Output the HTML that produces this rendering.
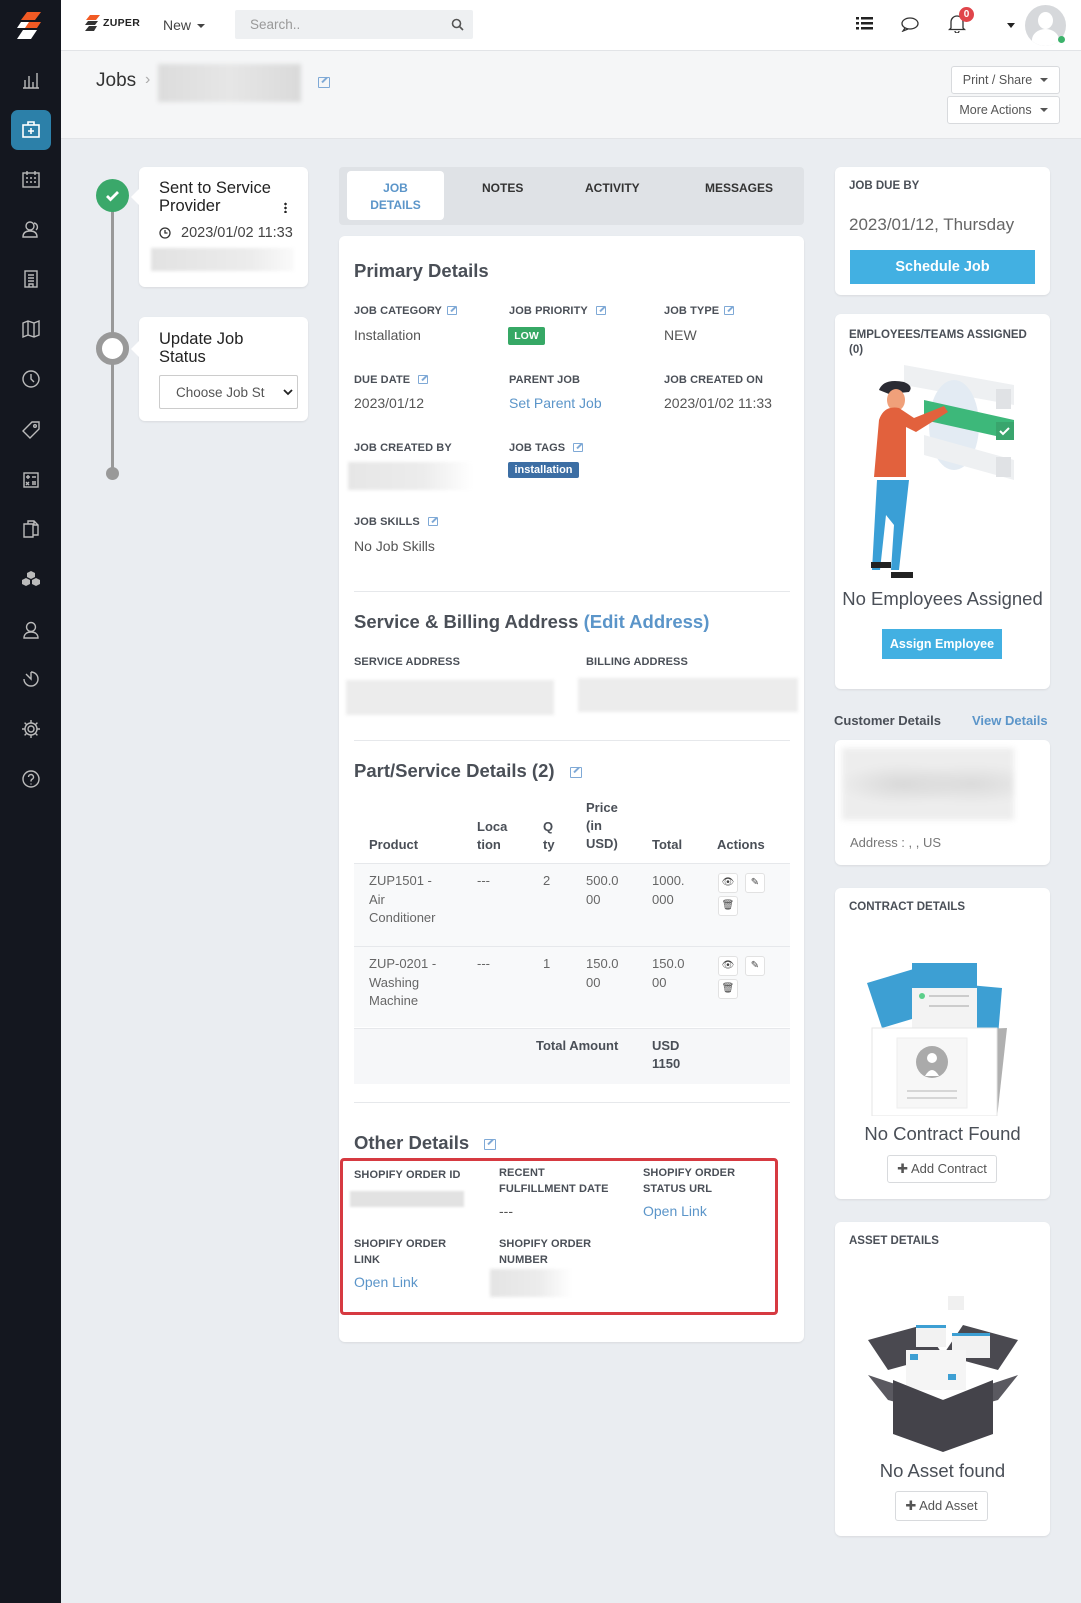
<!DOCTYPE html>
<html><head><meta charset="utf-8">
<style>
*{box-sizing:border-box;margin:0;padding:0}
body{width:1081px;height:1603px;background:#eaedf1;font-family:"Liberation Sans",sans-serif;color:#4a4f57;position:relative;overflow:hidden}
.a{position:absolute}
.card{position:absolute;background:#fff;border-radius:6px;box-shadow:0 1px 2px rgba(0,0,0,.08)}
.lbl{position:absolute;font-size:11px;font-weight:bold;color:#4a4f57;line-height:15px;letter-spacing:.1px}
.val{position:absolute;font-size:14px;color:#555;}
.link{color:#5b95c9}
.blur{position:absolute;background:linear-gradient(90deg,#e4e4e4,#eeeeee 60%,#f6f6f6);filter:blur(1.5px)}
.ed{display:inline-block;width:10px;height:9px;border:1.3px solid #7fa9d6;border-radius:1px;margin-left:5px;position:relative;vertical-align:-1px}
.ed:after{content:"";position:absolute;width:7px;height:2px;background:#7fa9d6;transform:rotate(-45deg);left:2px;top:1px}
.h2{position:absolute;font-size:18.5px;font-weight:bold;color:#4a4f57}
.hr{position:absolute;left:354px;width:436px;height:1px;background:#e6e8eb}
.th{position:absolute;font-size:13px;font-weight:bold;color:#4a4f57;line-height:18px}
.td{position:absolute;font-size:13px;color:#666;line-height:18.5px}
.ib{position:absolute;width:20px;height:20px;border:1px solid #e2e2e2;border-radius:3px;background:#fff;font-size:10px;text-align:center;line-height:18px;color:#444}
.sb svg{position:absolute;left:21px;width:20px;height:20px}
.btn{position:absolute;background:#fff;border:1px solid #d8dadd;border-radius:3px;font-size:12.5px;color:#555;text-align:center}
.car{display:inline-block;border-left:4px solid transparent;border-right:4px solid transparent;border-top:4px solid #555;vertical-align:2px;margin-left:8px}
.rt{position:absolute;font-size:11.5px;font-weight:bold;color:#4a4f57;left:849px}
.big{position:absolute;left:835px;width:215px;text-align:center;font-size:18.5px;color:#4a4f57}
</style></head><body>

<!-- sidebar -->
<div class="a sb" style="left:0;top:0;width:61px;height:1603px;background:#14171f">
 <svg style="top:10px;left:15px;width:32px;height:32px" viewBox="0 0 32 32"><path d="M12 2h14l-6 8H6z" fill="#f15a24"/><path d="M6 12h14l-4 6H2z" fill="#fff"/><path d="M14 12h12l-4 6H10z" fill="#f15a24"/><path d="M8 20h14l-6 9H2z" fill="#fff"/></svg>
 <svg style="top:70px" viewBox="0 0 20 20" fill="none" stroke="#bbb" stroke-width="1.4"><path d="M2 18h16M4 10v8M8 6v12M12 12v6M16 3v15"/></svg>
 <div class="a" style="left:11px;top:110px;width:40px;height:40px;background:#2c80a9;border-radius:7px"></div>
 <svg style="top:120px" viewBox="0 0 20 20" fill="none" stroke="#fff" stroke-width="1.6"><rect x="2" y="5" width="16" height="12"/><path d="M7 5V2h6v3M10 8v6M7 11h6"/></svg>
 <svg style="top:169px" viewBox="0 0 20 20" fill="none" stroke="#bbb" stroke-width="1.4"><rect x="2" y="4" width="16" height="14"/><path d="M6 2v4M14 2v4M5 9h2M9 9h2M13 9h2M5 13h2M9 13h2M13 13h2"/></svg>
 <svg style="top:219px" viewBox="0 0 20 20" fill="none" stroke="#bbb" stroke-width="1.4"><circle cx="9" cy="7" r="4"/><path d="M2 18c0-5 4-6 7-6s7 1 7 6zM13 4a4 4 0 0 1 2 7"/></svg>
 <svg style="top:269px" viewBox="0 0 20 20" fill="none" stroke="#bbb" stroke-width="1.4"><rect x="4" y="2" width="12" height="16"/><path d="M7 6h6M7 9h6M7 12h6M8 18v-3h4v3"/></svg>
 <svg style="top:319px" viewBox="0 0 20 20" fill="none" stroke="#bbb" stroke-width="1.4"><path d="M2 4l5-2 6 2 5-2v14l-5 2-6-2-5 2zM7 2v14M13 4v14"/></svg>
 <svg style="top:369px" viewBox="0 0 20 20" fill="none" stroke="#bbb" stroke-width="1.4"><circle cx="10" cy="10" r="8"/><path d="M10 5v5l3 3"/></svg>
 <svg style="top:420px" viewBox="0 0 20 20" fill="none" stroke="#bbb" stroke-width="1.4"><path d="M11 2h7v7l-9 9-7-7z"/><circle cx="14" cy="6" r="1.3"/></svg>
 <svg style="top:470px" viewBox="0 0 20 20" fill="none" stroke="#bbb" stroke-width="1.4"><rect x="3" y="3" width="14" height="14"/><path d="M5 7h4M7 5v4M11 7h4M5 12l3 3M8 12l-3 3M11 12h4M11 14h4"/></svg>
 <svg style="top:519px" viewBox="0 0 20 20" fill="none" stroke="#bbb" stroke-width="1.4"><path d="M3 5h9v13H3zM7 5V2h6l4 4v10h-5M13 2v4h4"/></svg>
 <svg style="top:569px" viewBox="0 0 20 20" fill="#bbb"><path d="M10 2l4 2v4l-4 2-4-2V4zM5 9l4 2v4l-4 2-4-2v-4zM15 9l4 2v4l-4 2-4-2v-4z"/></svg>
 <svg style="top:620px" viewBox="0 0 20 20" fill="none" stroke="#bbb" stroke-width="1.4"><circle cx="10" cy="7" r="4.5"/><path d="M3 18c0-4 3-6 7-6s7 2 7 6z"/></svg>
 <svg style="top:669px" viewBox="0 0 20 20" fill="none" stroke="#bbb" stroke-width="1.4"><path d="M10 3a7 7 0 1 1-7 7M10 3v7L5 5"/></svg>
 <svg style="top:719px" viewBox="0 0 20 20" fill="none" stroke="#bbb" stroke-width="1.4"><circle cx="10" cy="10" r="3"/><path d="M10 1v3M10 16v3M1 10h3M16 10h3M3.6 3.6l2.1 2.1M14.3 14.3l2.1 2.1M3.6 16.4l2.1-2.1M14.3 5.7l2.1-2.1"/><circle cx="10" cy="10" r="6"/></svg>
 <svg style="top:769px" viewBox="0 0 20 20" fill="none" stroke="#bbb" stroke-width="1.4"><circle cx="10" cy="10" r="8"/><path d="M7.5 8a2.5 2.5 0 1 1 3.5 2.3c-1 .5-1 1-1 2.2M10 14.5v1"/></svg>
</div>

<!-- top bar -->
<div class="a" style="left:61px;top:0;width:1020px;height:51px;background:#fff;border-bottom:1px solid #e2e4e7"></div>
<svg class="a" style="left:84px;top:15px" width="18" height="16" viewBox="0 0 18 16"><path d="M6 0h10l-4 5H2z" fill="#f15a24"/><path d="M4 6h10l-3 4H1z" fill="#333"/><path d="M5 11h8l-3 5H1z" fill="#333"/></svg>
<div class="a" style="left:103px;top:17px;font-size:10.5px;font-weight:bold;color:#222;letter-spacing:.3px">ZUPER</div>
<div class="a" style="left:163px;top:17px;font-size:14px;color:#444">New<span class="car" style="border-top-color:#444;margin-left:6px"></span></div>
<div class="a" style="left:235px;top:10px;width:238px;height:29px;background:#eef0f2;border-radius:2px"></div>
<div class="a" style="left:250px;top:17px;font-size:13.5px;color:#999">Search..</div>
<svg class="a" style="left:451px;top:18px" width="13" height="13" viewBox="0 0 13 13" fill="none" stroke="#555" stroke-width="1.6"><circle cx="5.5" cy="5.5" r="4"/><path d="M8.5 8.5l3.5 3.5"/></svg>
<svg class="a" style="left:856px;top:16px" width="17" height="15" viewBox="0 0 17 15" fill="#222"><rect x="0" y="1" width="3" height="2.5"/><rect x="5" y="1" width="12" height="2.5"/><rect x="0" y="6" width="3" height="2.5"/><rect x="5" y="6" width="12" height="2.5"/><rect x="0" y="11" width="3" height="2.5"/><rect x="5" y="11" width="12" height="2.5"/></svg>
<svg class="a" style="left:901px;top:17px" width="18" height="15" viewBox="0 0 18 15" fill="none" stroke="#333" stroke-width="1.3"><ellipse cx="9" cy="6.5" rx="8" ry="5.5"/><path d="M4 11l-2 3 5-2"/></svg>
<svg class="a" style="left:948px;top:13px" width="18" height="20" viewBox="0 0 18 20" fill="none" stroke="#333" stroke-width="1.3"><path d="M3 15V9a6 6 0 0 1 12 0v6l1.5 1.5h-15zM7 18a2 2 0 0 0 4 0"/></svg>
<div class="a" style="left:959px;top:7px;width:15px;height:15px;border-radius:50%;background:#e0454b;color:#fff;font-size:10px;font-weight:bold;text-align:center;line-height:15px">0</div>
<div class="a" style="left:1007px;top:23px;border-left:4px solid transparent;border-right:4px solid transparent;border-top:5px solid #222"></div>
<div class="a" style="left:1025px;top:5px;width:41px;height:41px;border-radius:50%;background:#d6d8db;overflow:hidden"><div class="a" style="left:13px;top:7px;width:15px;height:17px;border-radius:50%;background:#fff"></div><div class="a" style="left:7px;top:24px;width:27px;height:22px;border-radius:50% 50% 0 0;background:#fff"></div></div>
<div class="a" style="left:1058px;top:36px;width:7px;height:7px;border-radius:50%;background:#3bb26a"></div>

<!-- header -->
<div class="a" style="left:61px;top:51px;width:1020px;height:88px;background:#f5f6f7;border-bottom:1px solid #e2e4e7"></div>
<div class="a" style="left:96px;top:70px;font-size:19px;color:#333">Jobs</div>
<div class="a" style="left:145px;top:71px;font-size:16px;color:#aaa">›</div>
<div class="blur" style="left:158px;top:64px;width:143px;height:38px;background:linear-gradient(90deg,#dcdcdc,#e6e6e6 50%,#dadada);filter:blur(2px)"></div>
<div class="a" style="left:313px;top:74px"><span class="ed" style="width:12px;height:11px"></span></div>
<div class="btn" style="left:951px;top:66px;width:109px;height:28px;line-height:26px">Print / Share<span class="car"></span></div>
<div class="btn" style="left:947px;top:96px;width:113px;height:28px;line-height:26px">More Actions<span class="car"></span></div>

<!-- timeline -->
<div class="a" style="left:111px;top:195px;width:3px;height:280px;background:#999"></div>
<div class="a" style="left:96px;top:179px;width:33px;height:33px;border-radius:50%;background:#3aa86a"></div>
<svg class="a" style="left:105px;top:189px" width="15" height="13" viewBox="0 0 15 13"><path d="M2 7l3.5 3.5L13 3" fill="none" stroke="#fff" stroke-width="2.8"/></svg>
<div class="card" style="left:139px;top:167px;width:169px;height:120px"></div>
<div class="a" style="left:131px;top:189px;border-top:8px solid transparent;border-bottom:8px solid transparent;border-right:8px solid #fff"></div>
<div class="a" style="left:159px;top:179px;font-size:16.5px;color:#222;line-height:18px">Sent to Service<br>Provider</div>
<div class="a" style="left:284px;top:202px;width:3px;height:11px;background:radial-gradient(circle,#222 1.2px,transparent 1.4px) 0 0/3px 4px"></div>
<svg class="a" style="left:159px;top:227px" width="12" height="12" viewBox="0 0 12 12" fill="none" stroke="#333" stroke-width="1.3"><circle cx="6" cy="6" r="5"/><path d="M6 3v3h2.5"/></svg>
<div class="a" style="left:181px;top:225px;font-size:14.5px;color:#444">2023/01/02 11:33</div>
<div class="blur" style="left:151px;top:248px;width:143px;height:23px;background:linear-gradient(90deg,#e2e2e2,#ececec 70%,#fafafa)"></div>

<div class="a" style="left:96px;top:332px;width:33px;height:33px;border-radius:50%;border:6px solid #999;background:#fff"></div>
<div class="card" style="left:139px;top:317px;width:169px;height:104px"></div>
<div class="a" style="left:131px;top:341px;border-top:8px solid transparent;border-bottom:8px solid transparent;border-right:8px solid #fff"></div>
<div class="a" style="left:159px;top:330px;font-size:16.5px;color:#222;line-height:18px">Update Job<br>Status</div>
<div class="a" style="left:159px;top:375px;width:139px;height:34px;border:1px solid #ccc;border-radius:2px;background:#fff"></div>
<div class="a" style="left:176px;top:385px;font-size:13.5px;color:#555">Choose Job St</div>
<svg class="a" style="left:283px;top:389px" width="10" height="7" viewBox="0 0 10 7"><path d="M1 1l4 4 4-4" fill="none" stroke="#222" stroke-width="1.8"/></svg>
<div class="a" style="left:106px;top:467px;width:13px;height:13px;border-radius:50%;background:#999"></div>

<!-- tabs -->
<div class="a" style="left:339px;top:167px;width:465px;height:58px;background:#dfe2e6;border-radius:4px"></div>
<div class="a" style="left:347px;top:171px;width:97px;height:49px;background:#fff;border-radius:4px"></div>
<div class="a" style="left:347px;top:180px;width:97px;text-align:center;font-size:12px;font-weight:bold;color:#5b95c9;line-height:17px">JOB<br>DETAILS</div>
<div class="a" style="left:482px;top:181px;font-size:12px;font-weight:bold;color:#333">NOTES</div>
<div class="a" style="left:585px;top:181px;font-size:12px;font-weight:bold;color:#333">ACTIVITY</div>
<div class="a" style="left:705px;top:181px;font-size:12px;font-weight:bold;color:#333">MESSAGES</div>

<!-- main card -->
<div class="card" style="left:339px;top:236px;width:465px;height:1106px"></div>
<div class="h2" style="left:354px;top:260px">Primary Details</div>
<div class="lbl" style="left:354px;top:304px">JOB CATEGORY<span class="ed"></span></div>
<div class="lbl" style="left:509px;top:304px">JOB PRIORITY <span class="ed"></span></div>
<div class="lbl" style="left:664px;top:304px">JOB TYPE<span class="ed"></span></div>
<div class="val" style="left:354px;top:327px">Installation</div>
<div class="a" style="left:508px;top:327px;width:37px;height:18px;background:#36a865;border-radius:2px;color:#fff;font-size:10.5px;font-weight:bold;text-align:center;line-height:18px">LOW</div>
<div class="val" style="left:664px;top:327px">NEW</div>
<div class="lbl" style="left:354px;top:373px">DUE DATE <span class="ed"></span></div>
<div class="lbl" style="left:509px;top:373px">PARENT JOB</div>
<div class="lbl" style="left:664px;top:373px">JOB CREATED ON</div>
<div class="val" style="left:354px;top:395px">2023/01/12</div>
<div class="val link" style="left:509px;top:395px">Set Parent Job</div>
<div class="val" style="left:664px;top:395px">2023/01/02 11:33</div>
<div class="lbl" style="left:354px;top:441px">JOB CREATED BY</div>
<div class="lbl" style="left:509px;top:441px">JOB TAGS <span class="ed"></span></div>
<div class="blur" style="left:348px;top:462px;width:125px;height:28px;background:linear-gradient(90deg,#e6e6e6,#ececec 60%,#fff)"></div>
<div class="a" style="left:508px;top:462px;width:71px;height:16px;background:#3c6ea4;border-radius:2px;color:#fff;font-size:11px;font-weight:bold;text-align:center;line-height:16px">installation</div>
<div class="lbl" style="left:354px;top:515px">JOB SKILLS <span class="ed"></span></div>
<div class="val" style="left:354px;top:538px">No Job Skills</div>

<div class="hr" style="top:591px"></div>
<div class="h2" style="left:354px;top:611px">Service &amp; Billing Address <span class="link">(Edit Address)</span></div>
<div class="lbl" style="left:354px;top:655px">SERVICE ADDRESS</div>
<div class="lbl" style="left:586px;top:655px">BILLING ADDRESS</div>
<div class="blur" style="left:346px;top:680px;width:208px;height:35px;background:#ececec"></div>
<div class="blur" style="left:578px;top:678px;width:220px;height:34px;background:#ececec"></div>

<div class="hr" style="top:740px"></div>
<div class="h2" style="left:354px;top:760px">Part/Service Details (2) <span class="ed" style="width:12px;height:11px;margin-left:10px"></span></div>
<div class="th" style="left:369px;top:836px">Product</div>
<div class="th" style="left:477px;top:818px">Loca<br>tion</div>
<div class="th" style="left:543px;top:818px">Q<br>ty</div>
<div class="th" style="left:586px;top:799px">Price<br>(in<br>USD)</div>
<div class="th" style="left:652px;top:836px">Total</div>
<div class="th" style="left:717px;top:836px">Actions</div>
<div class="a" style="left:354px;top:863px;width:436px;height:83px;background:#f8f9fa;border-top:1px solid #e6e8eb"></div>
<div class="a" style="left:354px;top:946px;width:436px;height:81px;background:#f8f9fa;border-top:1px solid #e6e8eb"></div>
<div class="a" style="left:354px;top:1028px;width:436px;height:56px;background:#f6f7f9;border-top:1px solid #e6e8eb"></div>
<div class="td" style="left:369px;top:872px">ZUP1501 -<br>Air<br>Conditioner</div>
<div class="td" style="left:477px;top:872px">---</div>
<div class="td" style="left:543px;top:872px">2</div>
<div class="td" style="left:586px;top:872px">500.0<br>00</div>
<div class="td" style="left:652px;top:872px">1000.<br>000</div>
<div class="ib" style="left:718px;top:873px">👁</div><div class="ib" style="left:745px;top:873px">✎</div><div class="ib" style="left:718px;top:896px">🗑</div>
<div class="td" style="left:369px;top:955px">ZUP-0201 -<br>Washing<br>Machine</div>
<div class="td" style="left:477px;top:955px">---</div>
<div class="td" style="left:543px;top:955px">1</div>
<div class="td" style="left:586px;top:955px">150.0<br>00</div>
<div class="td" style="left:652px;top:955px">150.0<br>00</div>
<div class="ib" style="left:718px;top:956px">👁</div><div class="ib" style="left:745px;top:956px">✎</div><div class="ib" style="left:718px;top:979px">🗑</div>
<div class="th" style="left:536px;top:1037px">Total Amount</div>
<div class="th" style="left:652px;top:1037px">USD<br>1150</div>

<div class="hr" style="top:1102px"></div>
<div class="h2" style="left:354px;top:1132px">Other Details <span class="ed" style="width:12px;height:11px;margin-left:10px"></span></div>
<div class="a" style="left:340px;top:1158px;width:438px;height:157px;border:3px solid #d63a41;border-radius:4px"></div>
<div class="lbl" style="left:354px;top:1168px">SHOPIFY ORDER ID</div>
<div class="lbl" style="left:499px;top:1165px;line-height:16px">RECENT<br>FULFILLMENT DATE</div>
<div class="lbl" style="left:643px;top:1165px;line-height:16px">SHOPIFY ORDER<br>STATUS URL</div>
<div class="blur" style="left:350px;top:1191px;width:114px;height:16px;background:#e2e2e2;filter:blur(1px)"></div>
<div class="val" style="left:499px;top:1203px">---</div>
<div class="val link" style="left:643px;top:1203px">Open Link</div>
<div class="lbl" style="left:354px;top:1236px;line-height:16px">SHOPIFY ORDER<br>LINK</div>
<div class="lbl" style="left:499px;top:1236px;line-height:16px">SHOPIFY ORDER<br>NUMBER</div>
<div class="val link" style="left:354px;top:1274px">Open Link</div>
<div class="blur" style="left:490px;top:1269px;width:82px;height:28px;background:linear-gradient(90deg,#e4e4e4,#ececec 60%,#fff)"></div>

<!-- right column -->
<div class="card" style="left:835px;top:167px;width:215px;height:128px"></div>
<div class="rt" style="top:180px">JOB DUE BY</div>
<div class="a" style="left:849px;top:215px;font-size:17px;color:#666">2023/01/12, Thursday</div>
<div class="a" style="left:850px;top:250px;width:185px;height:34px;background:#42b0e2;color:#fff;font-size:14.5px;font-weight:bold;text-align:center;line-height:34px">Schedule Job</div>

<div class="card" style="left:835px;top:314px;width:215px;height:375px"></div>
<div class="rt" style="top:328px;line-height:15px">EMPLOYEES/TEAMS ASSIGNED<br>(0)</div>
<svg class="a" style="left:869px;top:360px" width="150" height="220" viewBox="0 0 150 220">
 <path d="M35 5l110 20v20L35 25z" fill="#eef0f2"/>
 <ellipse cx="85" cy="65" rx="25" ry="45" fill="#e3ebf3"/>
 <path d="M55 40l90 20v20l-90-20z" fill="#3db87a"/><rect x="127" y="62" width="18" height="18" fill="#39a56d"/><path d="M131 71l3 3 6-6" stroke="#fff" stroke-width="2" fill="none"/>
 <path d="M55 75l90 25v20l-90-25z" fill="#eef0f2"/><rect x="127" y="29" width="15" height="20" fill="#e0e2e5"/><rect x="127" y="97" width="15" height="20" fill="#e0e2e5"/>
 <path d="M10 30q5-12 25-8q10 4 5 10l-20 2z" fill="#2a2b33"/>
 <ellipse cx="27" cy="40" rx="9" ry="11" fill="#f0a07a"/>
 <path d="M10 60q5-15 20-12l15 10 30-12 4 6-32 20-10-5 0 50h-32z" fill="#e2613d"/>
 <path d="M8 120h32l-5 45-5 45h-8l3-45-8-10-6 55h-8z" fill="#3a9fd6"/>
 <path d="M2 202h20v6H2zM22 212h22v6H22z" fill="#222"/>
</svg>
<div class="big" style="top:588px">No Employees Assigned</div>
<div class="a" style="left:882px;top:629px;width:120px;height:30px;background:#42b0e2;color:#fff;font-size:12.5px;font-weight:bold;text-align:center;line-height:30px">Assign Employee</div>

<div class="a" style="left:834px;top:713px;font-size:13px;font-weight:bold;color:#4a4f57">Customer Details</div>
<div class="a" style="left:972px;top:713px;font-size:13px;font-weight:bold;color:#5b95c9">View Details</div>
<div class="card" style="left:835px;top:740px;width:215px;height:125px"></div>
<div class="blur" style="left:842px;top:748px;width:172px;height:72px;background:radial-gradient(ellipse at 35% 50%,#d8d8d8,transparent 40%),radial-gradient(ellipse at 75% 50%,#dadada,transparent 40%),#ededed;filter:blur(3px)"></div>
<div class="a" style="left:850px;top:835px;font-size:13px;color:#777">Address : , , US</div>

<div class="card" style="left:835px;top:888px;width:215px;height:311px"></div>
<div class="rt" style="top:901px">CONTRACT DETAILS</div>
<svg class="a" style="left:867px;top:958px" width="152" height="158" viewBox="0 0 152 158">
 <path d="M0 25l50-15 15 45-50 15z" fill="#3d9fd3"/>
 <rect x="45" y="5" width="65" height="50" fill="#3d9fd3"/>
 <path d="M80 25l55 5-5 60-55-5z" fill="#3d9fd3"/>
 <path d="M20 75l120-5-10 90z" fill="#b0b0b0"/>
 <rect x="45" y="30" width="65" height="40" fill="#f3f3f3"/>
 <circle cx="55" cy="38" r="3" fill="#5ccf8a"/><path d="M62 38h40M62 48h40" stroke="#ccc" stroke-width="2"/>
 <rect x="5" y="70" width="125" height="88" fill="#fff" stroke="#e5e5e5"/>
 <rect x="30" y="80" width="70" height="70" fill="#f7f7f7" stroke="#eee"/>
 <circle cx="65" cy="104" r="16" fill="#aaa"/><circle cx="65" cy="100" r="5" fill="#fff"/><path d="M58 118q7-12 14 0z" fill="#fff"/>
 <path d="M40 133h50M40 140h50" stroke="#ccc" stroke-width="1.5"/>
</svg>
<div class="big" style="top:1123px">No Contract Found</div>
<div class="btn" style="left:887px;top:1155px;width:110px;height:28px;line-height:26px;font-size:13px">✚ Add Contract</div>

<div class="card" style="left:835px;top:1222px;width:215px;height:314px"></div>
<div class="rt" style="top:1235px">ASSET DETAILS</div>
<svg class="a" style="left:868px;top:1290px" width="150" height="162" viewBox="0 0 150 162">
 <rect x="80" y="6" width="16" height="14" fill="#f0f0f0"/>
 <path d="M0 50l55-15 20 30-55 15zM150 50l-55-15-20 30 55 15z" fill="#4a4950"/>
 <rect x="48" y="35" width="30" height="22" fill="#f2f2f2"/><rect x="48" y="35" width="30" height="3" fill="#3d9fd3"/>
 <rect x="84" y="43" width="38" height="25" fill="#f2f2f2"/><rect x="84" y="43" width="38" height="3" fill="#3d9fd3"/>
 <rect x="38" y="60" width="60" height="40" fill="#f5f5f5"/><rect x="42" y="64" width="8" height="6" fill="#3d9fd3"/><rect x="80" y="84" width="8" height="6" fill="#3d9fd3"/>
 <path d="M0 85l75 25 75-25-20 25-55 15-55-15z" fill="#5a5960"/>
 <path d="M25 90l50 20v52l-50-18zM125 90l-50 20v52l50-18z" fill="#44434a"/>
</svg>
<div class="big" style="top:1460px">No Asset found</div>
<div class="btn" style="left:895px;top:1491px;width:93px;height:30px;line-height:28px;font-size:13px">✚ Add Asset</div>

</body></html>
